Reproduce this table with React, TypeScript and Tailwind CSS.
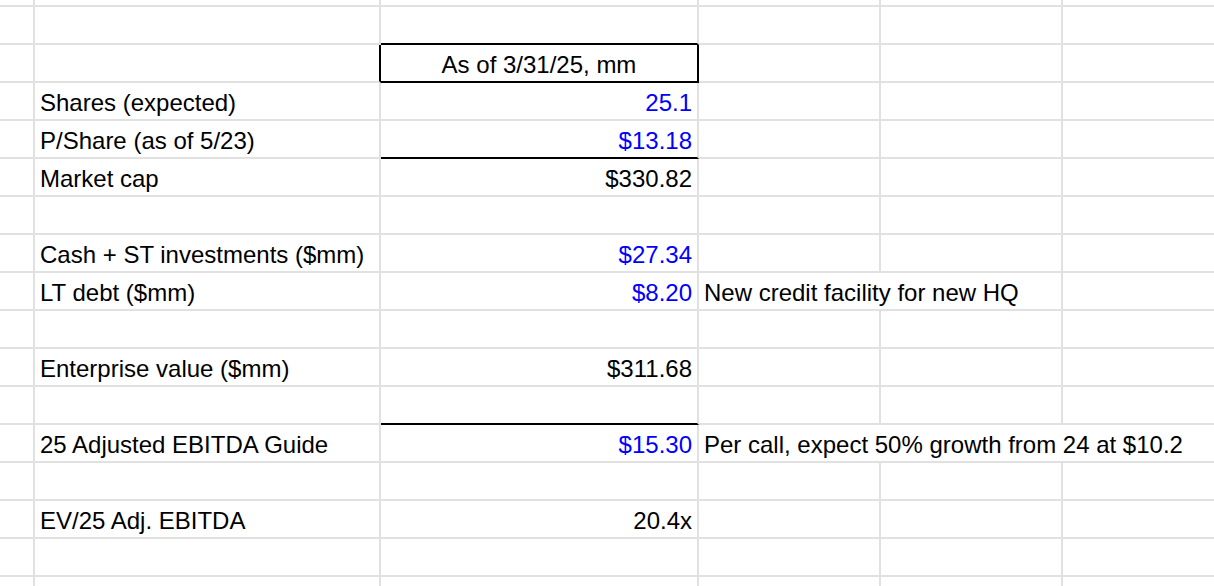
import React from 'react';

type Cell = {
    text?: string;
    align?: 'left' | 'right' | 'center';
    blue?: boolean;
    span?: number;
    rightBlack?: boolean;
    bottomBlack?: boolean;
};

const GRID = 'grid grid-cols-[35px_346px_318px_182px_182px_1fr]';

// 6 columns per row, A..F
const rows: { h: string; last?: boolean; cells: Cell[] }[] = [
    { h: 'h-[7px]', cells: [{}, {}, { bottomBlack: false }, {}, {}, {}] },
    { h: 'h-[38px]', cells: [{}, {}, { bottomBlack: true }, {}, {}, {}] },
    {
        h: 'h-[38px]',
        cells: [{}, { rightBlack: true }, { text: 'As of 3/31/25, mm', align: 'center', rightBlack: true, bottomBlack: true }, {}, {}, {}],
    },
    { h: 'h-[38px]', cells: [{}, { text: 'Shares (expected)' }, { text: '25.1', align: 'right', blue: true }, {}, {}, {}] },
    { h: 'h-[38px]', cells: [{}, { text: 'P/Share (as of 5/23)' }, { text: '$13.18', align: 'right', blue: true, bottomBlack: true }, {}, {}, {}] },
    { h: 'h-[38px]', cells: [{}, { text: 'Market cap' }, { text: '$330.82', align: 'right' }, {}, {}, {}] },
    { h: 'h-[38px]', cells: [{}, {}, {}, {}, {}, {}] },
    { h: 'h-[38px]', cells: [{}, { text: 'Cash + ST investments ($mm)' }, { text: '$27.34', align: 'right', blue: true }, {}, {}, {}] },
    {
        h: 'h-[38px]',
        cells: [{}, { text: 'LT debt ($mm)' }, { text: '$8.20', align: 'right', blue: true }, { text: 'New credit facility for new HQ', span: 2 }, {}],
    },
    { h: 'h-[38px]', cells: [{}, {}, {}, {}, {}, {}] },
    { h: 'h-[38px]', cells: [{}, { text: 'Enterprise value ($mm)' }, { text: '$311.68', align: 'right' }, {}, {}, {}] },
    { h: 'h-[38px]', cells: [{}, {}, { bottomBlack: true }, {}, {}, {}] },
    {
        h: 'h-[38px]',
        cells: [{}, { text: '25 Adjusted EBITDA Guide' }, { text: '$15.30', align: 'right', blue: true }, { text: 'Per call, expect 50% growth from 24 at $10.2', span: 3 }],
    },
    { h: 'h-[38px]', cells: [{}, {}, {}, {}, {}, {}] },
    { h: 'h-[38px]', cells: [{}, { text: 'EV/25 Adj. EBITDA' }, { text: '20.4x', align: 'right' }, {}, {}, {}] },
    { h: 'h-[38px]', cells: [{}, {}, {}, {}, {}, {}] },
    { h: 'h-[9px]', last: true, cells: [{}, {}, {}, {}, {}, {}] },
];

const spanClass = (n?: number) => (n === 3 ? 'col-span-3' : n === 2 ? 'col-span-2' : '');

export default function App() {
    return (
        <div className="w-[1214px] h-[586px] overflow-hidden bg-white text-black text-[24px] leading-[24px] font-['Liberation_Sans',Arial,sans-serif]">
            {rows.map((row, ri) => {
                let col = 0;
                return (
                    <div key={ri} className={`${GRID} ${row.h}`}>
                        {row.cells.map((c, ci) => {
                            const start = col;
                            col += c.span ?? 1;
                            const isLastCol = col >= 6;
                            const right = isLastCol ? '' : c.rightBlack ? 'border-r-2 border-r-black' : 'border-r-2 border-r-[#e1e1e1]';
                            const bottom = row.last ? '' : c.bottomBlack ? 'border-b-2 border-b-black' : 'border-b-2 border-b-[#e1e1e1]';
                            const align =
                                c.align === 'right' ? 'justify-end pr-[5px]' : c.align === 'center' ? 'justify-center' : 'justify-start pl-[5px]';
                            return (
                                <div
                                    key={ci + '-' + start}
                                    className={`flex items-end pb-[4px] whitespace-nowrap overflow-hidden ${right} ${bottom} ${align} ${spanClass(c.span)} ${
                                        c.blue ? 'text-[#0000ff]' : ''
                                    }`}
                                >
                                    {c.text}
                                </div>
                            );
                        })}
                    </div>
                );
            })}
        </div>
    );
}
